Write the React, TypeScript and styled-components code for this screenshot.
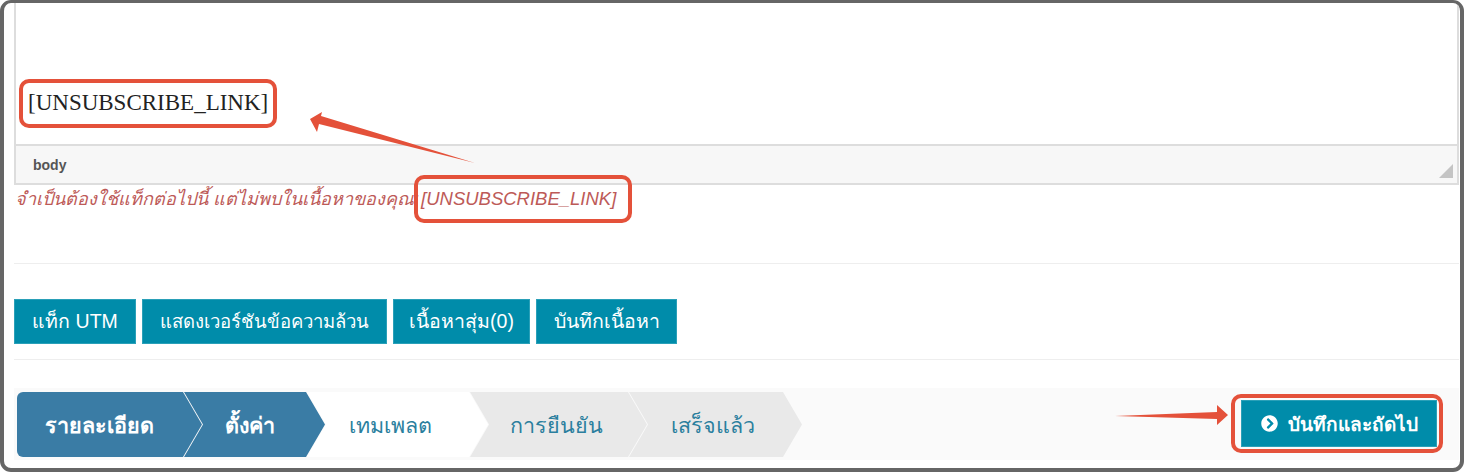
import styled, { createGlobalStyle } from "styled-components";
import { FaChevronCircleRight } from "react-icons/fa";

const THAI = `"Liberation Sans", Arial, "Noto Sans", "Noto Sans CJK SC", sans-serif`;

const Global = createGlobalStyle`
  html, body { margin: 0; padding: 0; background: #fff; }
  body { font-family: ${THAI}; }
`;

const Frame = styled.div`
  position: relative;
  box-sizing: border-box;
  width: 1464px;
  height: 472px;
  border: solid #666;
  border-width: 3px 4px 4px 4px;
  border-radius: 11px;
  padding: 0 1px 0 10px;
  overflow: hidden;
  display: flex;
  flex-direction: column;
`;

const Editor = styled.div`
  box-sizing: border-box;
  height: 182px;
  display: flex;
  flex-direction: column;
  border: solid #ddd;
  border-width: 0 2px 2px 2px;
`;

const EditArea = styled.div`
  flex: 1;
  padding: 85px 0 0 12px;
  font-family: "Liberation Serif", serif;
  font-size: 23px;
  line-height: 30px;
  color: #222;
`;

const StatusBar = styled.div`
  box-sizing: border-box;
  height: 39px;
  background: #f7f7f7;
  border-top: 2px solid #ddd;
  display: flex;
  align-items: center;
  justify-content: space-between;
  padding: 0 4px 0 17px;
  font-size: 14px;
  font-weight: 700;
  color: #555;
`;

const Resizer = styled.div`
  width: 0;
  height: 0;
  margin-top: 12px;
  border-left: 14px solid transparent;
  border-bottom: 14px solid #c4c4c4;
`;

const ErrorText = styled.div`
  margin-top: 2px;
  height: 76px;
  padding-left: 1px;
  font-size: 18px;
  line-height: 24px;
  font-style: italic;
  color: #bd5a58;
  border-bottom: 1px solid #eee;
`;

const MissingTag = styled.span`
  font-size: 18.5px;
  margin-left: 2px;
`;

const ButtonRow = styled.div`
  display: flex;
  gap: 6px;
  padding: 35px 0 15px;
  border-bottom: 1px solid #eee;
`;

const ActionButton = styled.button<{ $w: number; $size?: number }>`
  box-sizing: border-box;
  width: ${(p) => p.$w}px;
  height: 45px;
  padding: 0;
  border: 1px solid #2aa0b8;
  background: #008caa;
  color: #fff;
  font-family: ${THAI};
  font-size: ${(p) => p.$size ?? 19.5}px;
`;

const WizardBar = styled.div`
  box-sizing: border-box;
  margin-top: 28px;
  height: 72px;
  padding: 4px 22px 3px 3px;
  background: #fafafa;
  display: flex;
  align-items: center;
  justify-content: space-between;
`;

const Steps = styled.div`
  display: flex;
  height: 65px;
`;

const stepBg = { done: "#3a7ca5", current: "#fff", todo: "#e9e9e9" };

const Step = styled.div<{ $state: "done" | "current" | "todo"; $w: number; $first?: boolean; $pad?: number }>`
  box-sizing: border-box;
  width: ${(p) => p.$w}px;
  margin-left: ${(p) => (p.$first ? 0 : -19)}px;
  padding-left: ${(p) => p.$pad ?? 43}px;
  display: flex;
  align-items: center;
  font-size: 21.5px;
  font-weight: ${(p) => (p.$state === "done" ? 700 : 400)};
  color: ${(p) => (p.$state === "done" ? "#fff" : "#2b7f9e")};
  background: ${(p) => stepBg[p.$state]};
  border-radius: ${(p) => (p.$first ? "6px 0 0 6px" : 0)};
  clip-path: ${(p) =>
    p.$first
      ? "polygon(0 0, calc(100% - 19px) 0, 100% 50%, calc(100% - 19px) 100%, 0 100%)"
      : "polygon(1px 0, calc(100% - 19px) 0, 100% 50%, calc(100% - 19px) 100%, 1px 100%, 20px 50%)"};
`;

const SaveButton = styled.button`
  box-sizing: border-box;
  width: 196px;
  height: 47px;
  margin-bottom: 2px;
  border: 1px solid #2aa0b8;
  background: #008caa;
  color: #fff;
  font-family: ${THAI};
  font-size: 19px;
  font-weight: 700;
  display: flex;
  align-items: center;
  justify-content: center;
  gap: 10px;
`;

const Callout = styled.div<{ $x: number; $y: number; $w: number; $h: number }>`
  position: absolute;
  box-sizing: border-box;
  left: ${(p) => p.$x - 4}px;
  top: ${(p) => p.$y - 3}px;
  width: ${(p) => p.$w}px;
  height: ${(p) => p.$h}px;
  border: 4px solid #e4513a;
  border-radius: 10px;
`;

const Arrows = styled.svg`
  position: absolute;
  left: -4px;
  top: -3px;
  pointer-events: none;
`;

export default function App() {
  return (
    <Frame lang="th">
      <Global />
      <Editor>
        <EditArea>[UNSUBSCRIBE_LINK]</EditArea>
        <StatusBar>
          body
          <Resizer />
        </StatusBar>
      </Editor>
      <ErrorText>
        จำเป็นต้องใช้แท็กต่อไปนี้ แต่ไม่พบในเนื้อหาของคุณ:<MissingTag>[UNSUBSCRIBE_LINK]</MissingTag>
      </ErrorText>
      <ButtonRow>
        <ActionButton $w={122}>แท็ก UTM</ActionButton>
        <ActionButton $w={245} $size={18.5}>แสดงเวอร์ชันข้อความล้วน</ActionButton>
        <ActionButton $w={137}>เนื้อหาสุ่ม(0)</ActionButton>
        <ActionButton $w={141}>บันทึกเนื้อหา</ActionButton>
      </ButtonRow>
      <WizardBar>
        <Steps>
          <Step $state="done" $w={185} $first $pad={28}>รายละเอียด</Step>
          <Step $state="done" $w={142} $pad={42}>ตั้งค่า</Step>
          <Step $state="current" $w={182}>เทมเพลต</Step>
          <Step $state="todo" $w={178} $pad={41}>การยืนยัน</Step>
          <Step $state="todo" $w={174}>เสร็จแล้ว</Step>
        </Steps>
        <SaveButton>
          <FaChevronCircleRight size={17} />
          บันทึกและถัดไป
        </SaveButton>
      </WizardBar>
      <Callout $x={19} $y={79} $w={258} $h={49} />
      <Callout $x={414} $y={175} $w={218} $h={48} />
      <Callout $x={1231} $y={394} $w={212} $h={59} />
      <Arrows width="1465" height="474" viewBox="0 0 1465 474">
        <path d="M310 119 L322 112 L321 116 L475 163 L319 124 L317 132 Z" fill="#e4513a" />
        <path d="M1115 416 L1217 412 L1217 405 L1228 415 L1217 425 L1217 419 Z" fill="#e4513a" />
      </Arrows>
    </Frame>
  );
}
